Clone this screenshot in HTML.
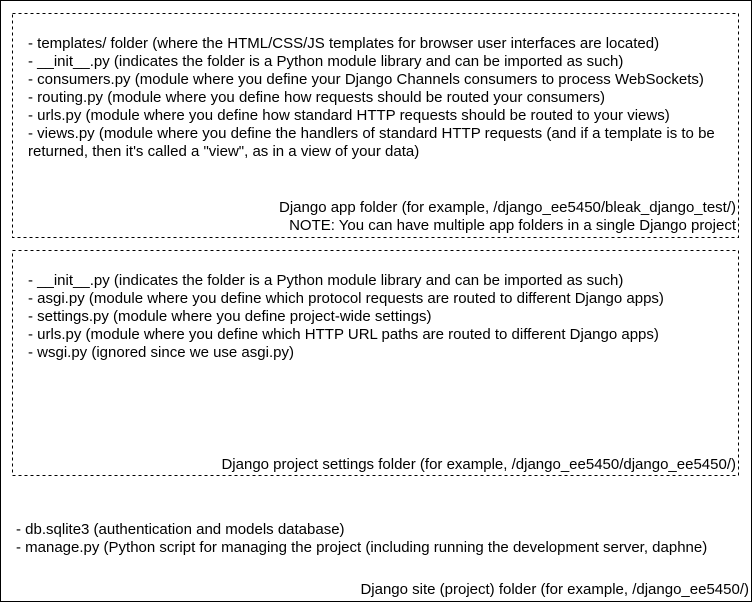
<!DOCTYPE html>
<html><head><style>
body{margin:0;width:752px;height:602px;background:#fff;position:relative;font-family:"Liberation Sans",Arial,sans-serif;font-size:15px;color:#000;overflow:hidden}
.t{position:absolute;white-space:nowrap;line-height:18px}
.r{text-align:right}
</style></head><body>
<svg width="752" height="602" style="position:absolute;left:0;top:0">
<rect x="0.5" y="0.5" width="751" height="601" fill="none" stroke="#000"/>
<rect x="12.5" y="13.5" width="726" height="224" fill="none" stroke="#000" stroke-dasharray="3 3"/>
<rect x="12.5" y="250.5" width="726" height="225" fill="none" stroke="#000" stroke-dasharray="3 3"/>
</svg>
<div class="t" style="left:28px;top:35px">- templates/ folder (where the HTML/CSS/JS templates for browser user interfaces are located)<br>- __init__.py (indicates the folder is a Python module library and can be imported as such)<br>- consumers.py (module where you define your Django Channels consumers to process WebSockets)<br>- routing.py (module where you define how requests should be routed your consumers)<br>- urls.py (module where you define how standard HTTP requests should be routed to your views)<br>- views.py (module where you define the handlers of standard HTTP requests (and if a template is to be<br>returned, then it's called a "view", as in a view of your data)</div>
<div class="t r" style="right:16px;top:199px">Django app folder (for example, /django_ee5450/bleak_django_test/)<br>NOTE: You can have multiple app folders in a single Django project</div>
<div class="t" style="left:28px;top:272px">- __init__.py (indicates the folder is a Python module library and can be imported as such)<br>- asgi.py (module where you define which protocol requests are routed to different Django apps)<br>- settings.py (module where you define project-wide settings)<br>- urls.py (module where you define which HTTP URL paths are routed to different Django apps)<br>- wsgi.py (ignored since we use asgi.py)</div>
<div class="t r" style="right:16px;top:456px">Django project settings folder (for example, /django_ee5450/django_ee5450/)</div>
<div class="t" style="left:16px;top:521px">- db.sqlite3 (authentication and models database)<br>- manage.py (Python script for managing the project (including running the development server, daphne)</div>
<div class="t r" style="right:3px;top:581px">Django site (project) folder (for example, /django_ee5450/)</div>
</body></html>
